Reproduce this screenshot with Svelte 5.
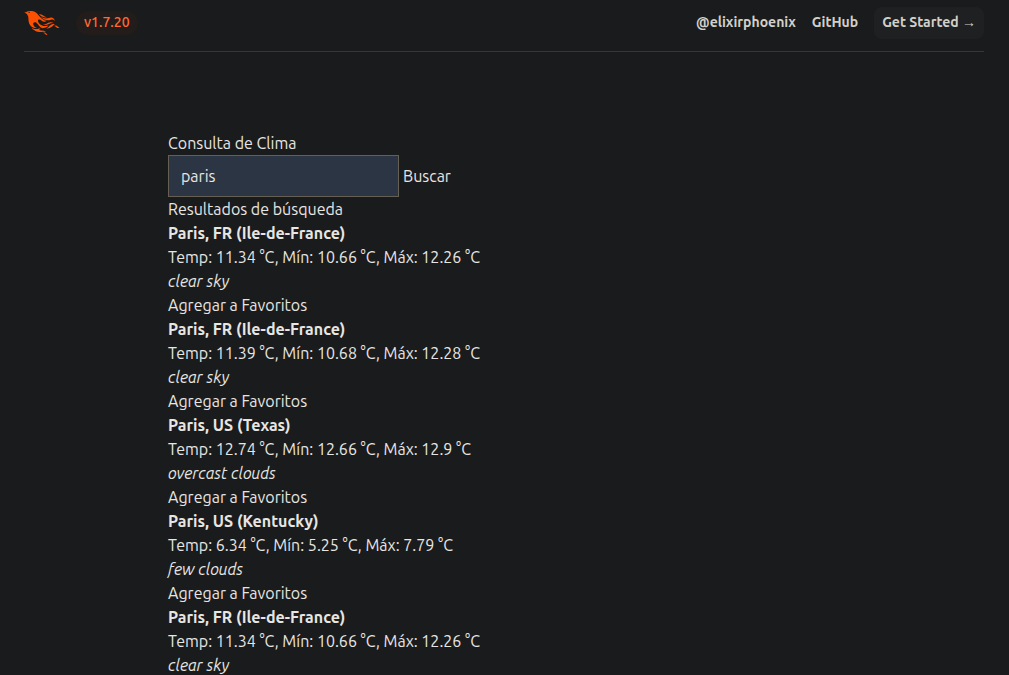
<script>
  const results = [
    { place: 'Paris, FR (Ile-de-France)', temp: 11.34, min: 10.66, max: 12.26, sky: 'clear sky' },
    { place: 'Paris, FR (Ile-de-France)', temp: 11.39, min: 10.68, max: 12.28, sky: 'clear sky' },
    { place: 'Paris, US (Texas)', temp: 12.74, min: 12.66, max: 12.9, sky: 'overcast clouds' },
    { place: 'Paris, US (Kentucky)', temp: 6.34, min: 5.25, max: 7.79, sky: 'few clouds' },
    { place: 'Paris, FR (Ile-de-France)', temp: 11.34, min: 10.66, max: 12.26, sky: 'clear sky' }
  ];
  let city = $state('paris');
</script>

<div class="page">
  <header>
    <div class="bar">
      <div class="brand">
        <a href="/" aria-label="Phoenix">
          <svg viewBox="0 0 71 48" width="36" fill="#fd4f00" aria-hidden="true">
            <path d="m26.371 33.477-.552-.1c-3.92-.729-6.397-3.1-7.57-6.829-.733-2.324.597-4.035 3.035-4.148 1.995-.092 3.362 1.055 4.57 2.39 1.557 1.72 2.984 3.558 4.514 5.305 2.202 2.515 4.797 4.134 8.347 3.634 3.183-.448 5.958-1.725 8.371-3.828.363-.316.761-.592 1.144-.886l-.241-.284c-2.027.63-4.093.841-6.205.735-3.195-.16-6.24-.828-8.964-2.582-2.486-1.601-4.319-3.746-5.19-6.611-.704-2.315.736-3.934 3.135-3.6.948.133 1.746.56 2.463 1.165.583.493 1.143 1.015 1.738 1.493 2.8 2.25 6.712 2.375 10.265-.068-5.842-.026-9.817-3.24-13.308-7.313-1.366-1.594-2.7-3.216-4.095-4.785-2.698-3.036-5.692-5.71-9.79-6.623C12.8-.623 7.745.14 2.893 2.361 1.926 2.804.997 3.319 0 4.149c.494 0 .763.006 1.032 0 2.446-.064 4.28 1.023 5.602 3.024.962 1.457 1.415 3.104 1.761 4.798.513 2.515.247 5.078.544 7.605.761 6.494 4.08 11.026 10.26 13.346 2.267.852 4.591 1.135 7.172.555ZM10.751 3.852c-.976.246-1.756-.148-2.56-.962 1.377-.343 2.592-.476 3.897-.528-.107.848-.607 1.306-1.336 1.49Zm32.002 37.924c-.085-.626-.62-.901-1.04-1.228-1.857-1.446-4.03-1.958-6.333-2-1.375-.026-2.735-.128-4.031-.61-.595-.22-1.26-.505-1.244-1.272.015-.78.693-1 1.31-1.184.505-.15 1.026-.247 1.6-.382-1.46-.936-2.886-1.065-4.787-.3-2.993 1.202-5.943 1.06-8.926-.017-1.684-.608-3.179-1.563-4.735-2.408l-.077-.053.002.137c1.29 2.115 3.034 3.817 5.004 5.271 3.793 2.8 7.936 4.471 12.784 3.73A66.714 66.714 0 0 1 37 40.877c1.98-.16 3.866.398 5.753.899Zm-9.14-30.345c-.105-.076-.206-.266-.42-.069 1.745 2.36 3.985 4.098 6.683 5.193 4.354 1.767 8.773 2.07 13.293.51 3.51-1.21 6.033-.028 7.343 3.38.19-3.955-2.137-6.837-5.843-7.401-2.084-.318-4.01.373-5.962.94-5.434 1.575-10.485.798-15.094-2.553Zm27.085 15.425c.708.059 1.416.123 2.124.185-1.6-1.405-3.55-1.517-5.523-1.404-3.003.17-5.167 1.903-7.14 3.972-1.739 1.824-3.31 3.87-5.903 4.604.043.078.054.117.066.117.35.005.699.021 1.047.005 3.768-.17 7.317-.965 10.14-3.7.89-.86 1.685-1.817 2.544-2.71.716-.746 1.584-1.159 2.645-1.07Zm-8.753-4.67c-2.812.246-5.254 1.409-7.548 2.943-1.766 1.18-3.654 1.738-5.776 1.37-.374-.066-.75-.114-1.124-.17l-.013.156c.135.07.265.151.405.207.354.14.702.308 1.07.395 4.083.971 7.992.474 11.516-1.803 2.221-1.435 4.521-1.707 7.013-1.336.252.038.503.083.756.107.234.022.479.255.795.003-2.179-1.574-4.526-2.096-7.094-1.872Zm-10.049-9.544c1.475.051 2.943-.142 4.486-1.059-.452.04-.643.04-.827.076-2.126.424-4.033-.04-5.733-1.383-.623-.493-1.257-.974-1.889-1.457-2.503-1.914-5.374-2.555-8.514-2.5.05.154.054.26.108.315 3.417 3.455 7.371 5.836 12.369 6.008Zm24.727 17.731c-2.114-2.097-4.952-2.367-7.578-.537 1.738.078 3.043.632 4.101 1.728.374.388.763.768 1.182 1.106 1.6 1.29 4.311 1.352 5.896.155-1.861-.726-1.861-.726-3.601-2.452Zm-21.058 16.06c-1.858-3.46-4.981-4.24-8.59-4.008a9.667 9.667 0 0 1 2.977 1.39c.84.586 1.547 1.311 2.243 2.055 1.38 1.473 3.534 2.376 4.962 2.07-.656-.412-1.238-.848-1.592-1.507Z" />
          </svg>
        </a>
        <p class="version">v1.7.20</p>
      </div>
      <nav>
        <a href="https://twitter.com/elixirphoenix">@elixirphoenix</a>
        <a href="https://github.com/phoenixframework/phoenix">GitHub</a>
        <a class="start" href="https://hexdocs.pm/phoenix/overview.html">Get Started <span>→</span></a>
      </nav>
    </div>
  </header>

  <main>
    <div class="content">
      <h1><label for="city">Consulta de Clima</label></h1>
      <form onsubmit={(e) => e.preventDefault()}>
        <input id="city" type="text" bind:value={city} />
        <button type="submit">Buscar</button>
      </form>
      <h2>Resultados de búsqueda</h2>
      <ul>
        {#each results as r}
          <li>
            <strong>{r.place}</strong>
            <p>Temp: {r.temp} °C, Mín: {r.min} °C, Máx: {r.max} °C</p>
            <em>{r.sky}</em>
            <button type="button">Agregar a Favoritos</button>
          </li>
        {/each}
      </ul>
    </div>
  </main>
</div>

<style>
  :global(body) {
    margin: 0;
    background: #1a1b1c;
  }
  .page {
    height: 100vh;
    margin-right: 1px;
    overflow: hidden;
    color: #e8e6e3;
    font: 16px/24px Ubuntu, "Noto Sans", sans-serif;
  }
  h1, h2, p, ul {
    margin: 0;
    padding: 0;
    font-size: inherit;
    font-weight: inherit;
    list-style: none;
  }
  a {
    color: inherit;
    text-decoration: none;
  }
  header {
    padding: 0 24px;
  }
  .bar {
    display: flex;
    align-items: center;
    justify-content: space-between;
    padding: 7px 0 12px;
    border-bottom: 1px solid #35383a;
    font-size: 14px;
    line-height: 22px;
  }
  .brand, nav {
    display: flex;
    align-items: center;
    gap: 16px;
  }
  svg {
    display: block;
  }
  .version, nav a {
    padding-bottom: 2px;
  }
  .version {
    padding-inline: 8px;
    border-radius: 12px;
    background: #221c1a;
    color: #ff6a33;
    font-weight: 500;
  }
  nav {
    color: #d3cfc9;
    font-weight: 600;
  }
  nav .start {
    padding: 4px 8px 6px;
    border-radius: 8px;
    background: #1f2022;
  }
  main {
    padding: 79px 24px;
  }
  .content {
    max-width: 672px;
    margin: 0 auto;
  }
  form {
    display: flex;
    align-items: center;
    gap: 4px;
  }
  input {
    box-sizing: border-box;
    width: 231px;
    height: 42px;
    padding: 8px 12px;
    border: 1px solid #655f54;
    border-radius: 0;
    outline: none;
    background: #2b3544;
    color: inherit;
    font: inherit;
  }
  button {
    padding: 0;
    border: 0;
    background: none;
    color: inherit;
    font: inherit;
    cursor: pointer;
  }
  strong, em, li button {
    display: block;
  }
  strong {
    font-weight: 700;
  }
</style>
